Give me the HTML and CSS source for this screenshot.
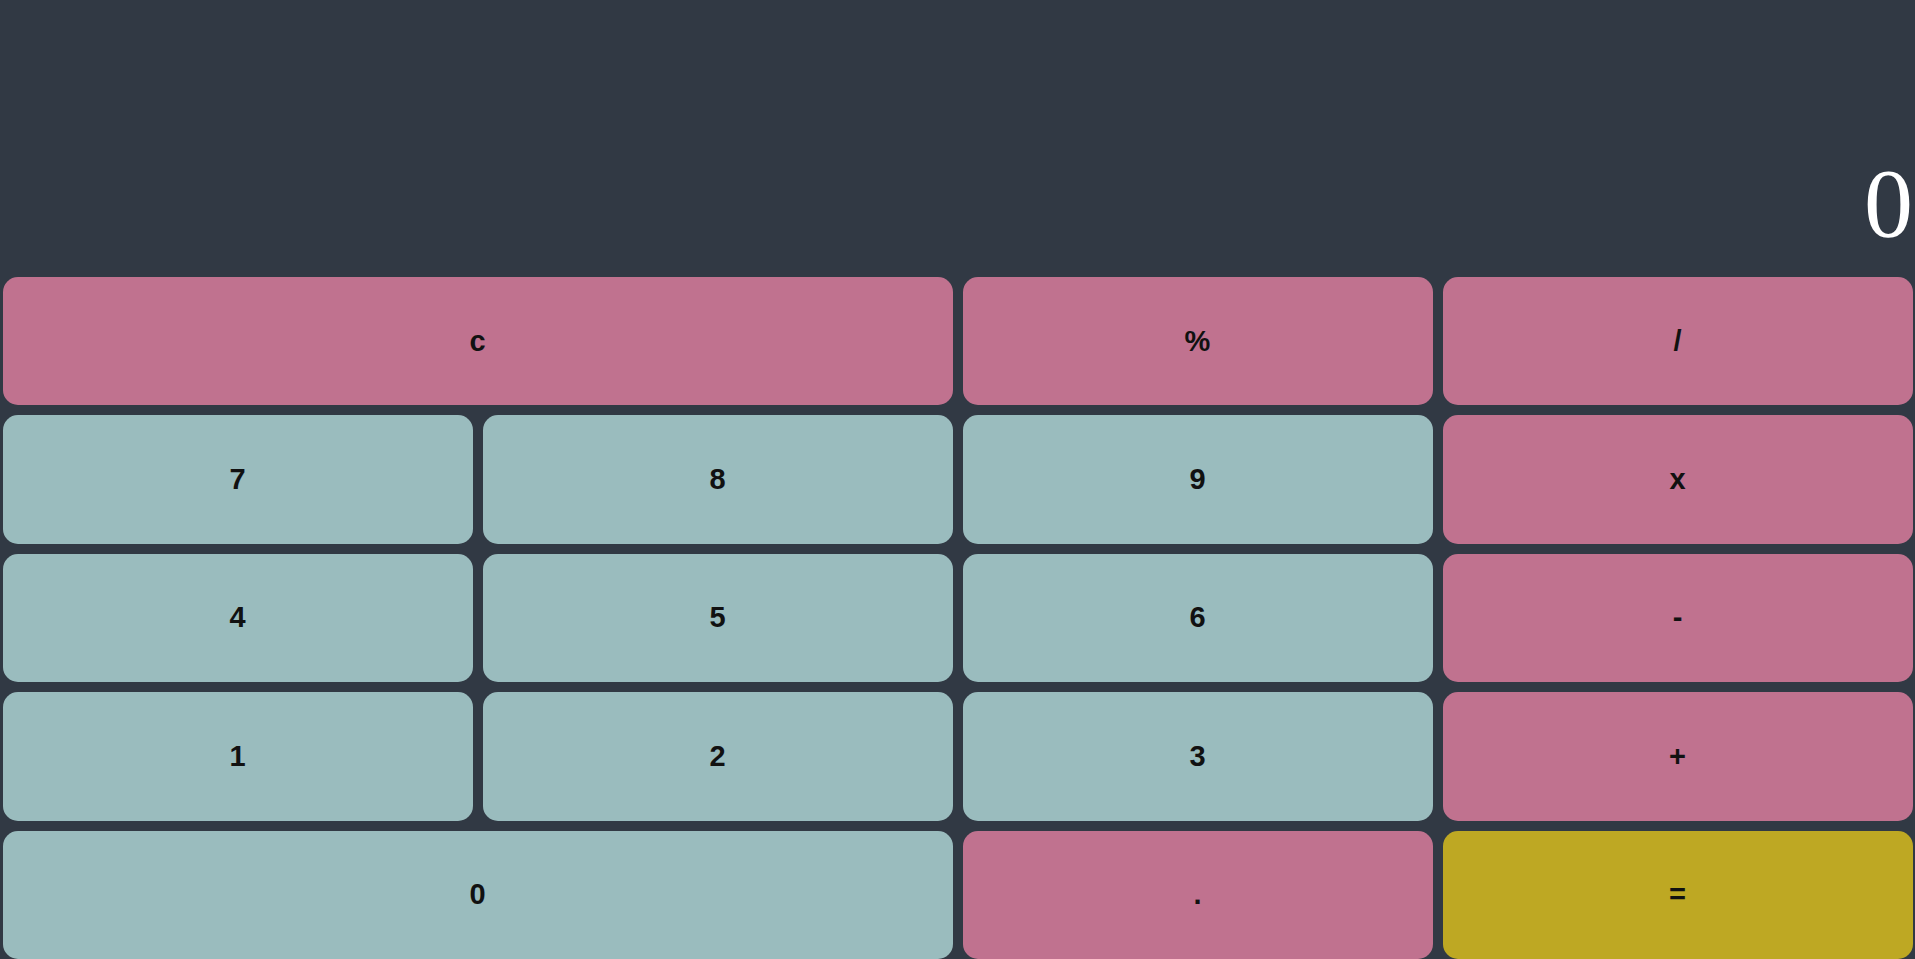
FILE: index.html
```html
<!DOCTYPE html>
<html>
<head>
<meta charset="utf-8">
<link rel="stylesheet" href="styles.css">
</head>
<body>
<div class="calc">
  <div class="display">0</div>
  <div class="keys">
    <button class="key op wide">c</button>
    <button class="key op">%</button>
    <button class="key op">/</button>
    <button class="key num">7</button>
    <button class="key num">8</button>
    <button class="key num">9</button>
    <button class="key op">x</button>
    <button class="key num">4</button>
    <button class="key num">5</button>
    <button class="key num">6</button>
    <button class="key op">-</button>
    <button class="key num">1</button>
    <button class="key num">2</button>
    <button class="key num">3</button>
    <button class="key op">+</button>
    <button class="key num wide">0</button>
    <button class="key op">.</button>
    <button class="key eq">=</button>
  </div>
</div>
</body>
</html>
```
FILE: styles.css
```css
html, body {
  margin: 0;
  padding: 0;
  height: 100%;
  background: #313944;
}
.calc {
  height: 100vh;
  display: flex;
  flex-direction: column;
}
.display {
  height: 277px;
  flex: none;
  box-sizing: border-box;
  display: flex;
  align-items: flex-end;
  justify-content: flex-end;
  padding: 0 2px 25px 0;
  color: #ffffff;
  font-family: "Liberation Serif", "Times New Roman", serif;
  font-size: 98px;
  line-height: 1;
}
.keys {
  flex: 1;
  display: grid;
  grid-template-columns: repeat(4, 1fr);
  grid-template-rows: repeat(5, 1fr);
  gap: 10px;
  padding: 0 2.5px 0;
}
.key {
  border: none;
  border-radius: 15px;
  font-family: "Liberation Sans", Arial, sans-serif;
  font-weight: bold;
  font-size: 29px;
  color: #111111;
  padding: 0;
  margin: 0;
}
.wide {
  grid-column: span 2;
}
.op {
  background: #c0728f;
}
.num {
  background: #9abcbe;
}
.eq {
  background: #bea823;
}
```
